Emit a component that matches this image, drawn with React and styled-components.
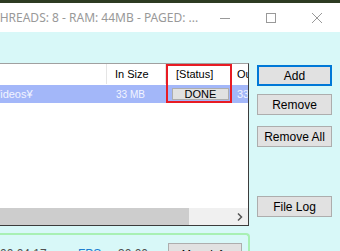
import React from "react";
import styled, { createGlobalStyle } from "styled-components";

const GlobalStyle = createGlobalStyle`
    html, body {
        margin: 0;
        padding: 0;
        width: 340px;
        height: 251px;
        overflow: hidden;
        background: #d8f8f8;
    }
`;

const Screen = styled.div`
    width: 340px;
    height: 251px;
    overflow: hidden;
    display: flex;
    flex-direction: column;
    font-family: "Liberation Sans", Arial, sans-serif;
    font-size: 11px;
    background: #d8f8f8;
`;

const Desktop = styled.div`
    height: 3px;
    background: #2d3b22;
    flex-shrink: 0;
`;

const TitleBar = styled.div`
    height: 29px;
    background: #ffffff;
    display: flex;
    align-items: center;
    flex-shrink: 0;
`;

const TitleText = styled.div`
    flex: 1;
    overflow: hidden;
    white-space: nowrap;
    font-family: "Noto Sans", "Open Sans", sans-serif;
    font-size: 12px;
    color: #999999;
    span {
        display: inline-block;
        margin-left: -7px;
    }
`;

const CaptionButton = styled.div`
    width: 46px;
    height: 29px;
    display: flex;
    align-items: center;
    justify-content: center;
    flex-shrink: 0;
`;

const Client = styled.div`
    flex: 1;
    display: flex;
    padding-top: 31px;
`;

const LeftColumn = styled.div`
    width: 249px;
    display: flex;
    flex-direction: column;
    flex-shrink: 0;
`;

const ListView = styled.div`
    position: relative;
    height: 163px;
    background: #ffffff;
    border-top: 1px solid #a0a0a0;
    border-right: 1px solid #3c3c3c;
    border-bottom: 1px solid #3c3c3c;
    display: flex;
    flex-direction: column;
    box-sizing: border-box;
`;

const Row = styled.div`
    display: grid;
    grid-template-columns: 107px 59px 66px 1fr;
    height: ${(p) => p.h}px;
    background: ${(p) => (p.selected ? "#a3b7f9" : "#ffffff")};
    color: ${(p) => (p.selected ? "#f2f4ff" : "#000000")};
    border-bottom: ${(p) => (p.selected ? "none" : "1px solid #ffffff")};
    flex-shrink: 0;
`;

const Cell = styled.div`
    display: flex;
    align-items: center;
    overflow: hidden;
    white-space: nowrap;
    padding-left: ${(p) => p.pad ?? 9}px;
    border-right: ${(p) => (p.sep ? "1px solid #e5e5e5" : "none")};
    font-size: ${(p) => p.size || 11}px;
`;

const PathText = styled.span`
    margin-left: -10px;
`;

const DoneButton = styled.div`
    width: 57px;
    height: 12px;
    margin-left: 6px;
    background: #e1e1e1;
    border: 1px solid #adadad;
    box-sizing: border-box;
    display: flex;
    align-items: center;
    justify-content: center;
    color: #000000;
    font-size: 11px;
`;

const ListBody = styled.div`
    flex: 1;
`;

const HScroll = styled.div`
    height: 17px;
    display: flex;
    background: #f0f0f0;
    align-items: center;
    flex-shrink: 0;
`;

const Thumb = styled.div`
    width: 189px;
    height: 17px;
    background: #cdcdcd;
`;

const ScrollArrow = styled.div`
    margin-left: auto;
    width: 17px;
    display: flex;
    justify-content: center;
`;

const Highlight = styled.div`
    position: absolute;
    left: 166px;
    top: 0;
    width: 66px;
    height: 39px;
    border: 2px solid #e81c24;
    box-sizing: border-box;
`;

const GroupBox = styled.div`
    margin-top: 7px;
    border-top: 2px solid #a8f0b4;
    border-right: 2px solid #a8f0b4;
    border-top-right-radius: 4px;
    flex: 1;
    display: flex;
    align-items: flex-start;
    padding-top: 8px;
    color: #505050;
    margin-right: -1px;
`;

const StatText = styled.span`
    width: ${(p) => p.w}px;
    color: ${(p) => p.color || "#505050"};
    font-size: 12px;
    padding-top: 4px;
`;

const SmallButton = styled.div`
    width: 74px;
    height: 22px;
    background: #e1e1e1;
    border: 1px solid #adadad;
    box-sizing: border-box;
    display: flex;
    align-items: center;
    justify-content: center;
    color: #000000;
    font-size: 11px;
`;

const RightColumn = styled.div`
    margin-left: 8px;
    display: flex;
    flex-direction: column;
    padding-top: 2px;
`;

const ActionButton = styled.div`
    width: 75px;
    height: 21px;
    margin-top: ${(p) => p.gap || 0}px;
    background: #e1e1e1;
    border: ${(p) => (p.focused ? "2px solid #0078d7" : "1px solid #adadad")};
    box-sizing: border-box;
    display: flex;
    align-items: center;
    justify-content: center;
    color: #000000;
    font-size: 12px;
`;

export default function App() {
    return (
        <Screen>
            <GlobalStyle />
            <Desktop />
            <TitleBar>
                <TitleText>
                    <span>THREADS: 8 - RAM: 44MB - PAGED: ...</span>
                </TitleText>
                <CaptionButton>
                    <svg width="10" height="10" viewBox="0 0 10 10">
                        <path d="M0 5.5H10" stroke="#999" strokeWidth="1" />
                    </svg>
                </CaptionButton>
                <CaptionButton>
                    <svg width="10" height="10" viewBox="0 0 10 10">
                        <rect x="0.5" y="0.5" width="9" height="9" fill="none" stroke="#999" />
                    </svg>
                </CaptionButton>
                <CaptionButton>
                    <svg width="10" height="10" viewBox="0 0 10 10">
                        <path d="M0 0L10 10M10 0L0 10" stroke="#999" strokeWidth="1" />
                    </svg>
                </CaptionButton>
            </TitleBar>
            <Client>
                <LeftColumn>
                    <ListView>
                        <Row h={20}>
                            <Cell sep />
                            <Cell sep pad={8}>In Size</Cell>
                            <Cell sep pad={10}>[Status]</Cell>
                            <Cell pad={5}>Out</Cell>
                        </Row>
                        <Row h={18} selected>
                            <Cell pad={0}>
                                <PathText>\Videos¥</PathText>
                            </Cell>
                            <Cell pad={9} size={10}>33 MB</Cell>
                            <Cell pad={0}>
                                <DoneButton>DONE</DoneButton>
                            </Cell>
                            <Cell pad={5}>33 MB</Cell>
                        </Row>
                        <ListBody />
                        <HScroll>
                            <Thumb />
                            <ScrollArrow>
                                <svg width="6" height="8" viewBox="0 0 6 8">
                                    <path d="M1 0.5L4.5 4L1 7.5" fill="none" stroke="#555" strokeWidth="1.5" />
                                </svg>
                            </ScrollArrow>
                        </HScroll>
                        <Highlight />
                    </ListView>
                    <GroupBox>
                        <StatText w={78}>00:04:17</StatText>
                        <StatText w={40} color="#1e7fd0">FPS</StatText>
                        <StatText w={50}>30.00</StatText>
                        <SmallButton>More Info</SmallButton>
                    </GroupBox>
                </LeftColumn>
                <RightColumn>
                    <ActionButton focused>Add</ActionButton>
                    <ActionButton gap={8}>Remove</ActionButton>
                    <ActionButton gap={11}>Remove All</ActionButton>
                    <ActionButton gap={49}>File Log</ActionButton>
                </RightColumn>
            </Client>
        </Screen>
    );
}
